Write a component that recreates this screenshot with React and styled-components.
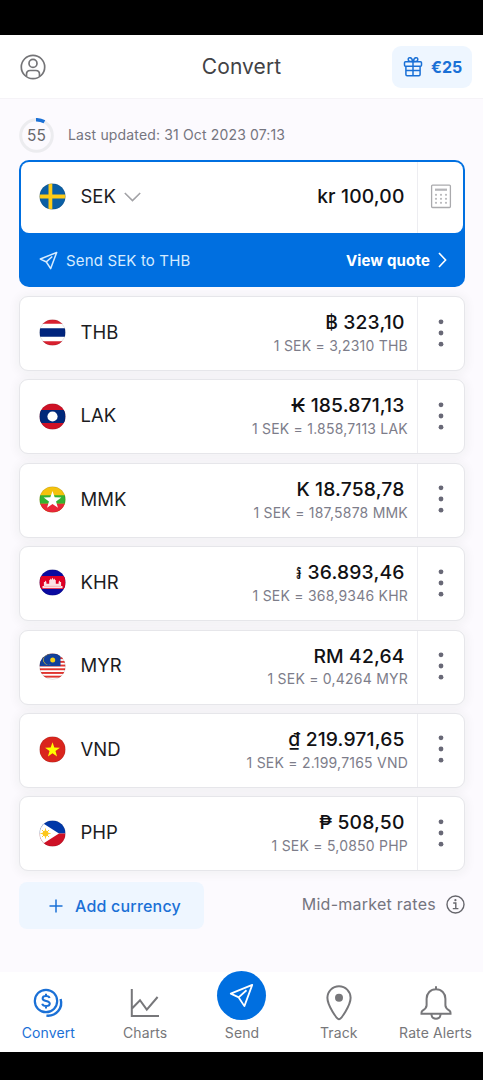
import React from "react";
import styled, { createGlobalStyle } from "styled-components";

const GlobalStyle = createGlobalStyle`
  * {
    box-sizing: border-box;
  }

  body {
    margin: 0;
    background: #000;
    font-family: Inter, "Noto Sans", "DejaVu Sans", sans-serif;
    -webkit-font-smoothing: antialiased;
  }

  svg {
    display: block;
    flex: none;
  }
`;

const Screen = styled.div`
  display: flex;
  flex-direction: column;
  width: 483px;
  height: 1080px;
  padding: 35px 0 28px;
  overflow: hidden;
  background: #000;
`;

const Header = styled.header`
  display: grid;
  grid-template-columns: 1fr auto 1fr;
  align-items: center;
  height: 63px;
  padding: 0 11px 0 20px;
  background: #fff;
`;

const Title = styled.h1`
  margin: 0 0 0 -9px;
  color: #424245;
  font-size: 21px;
  font-weight: 400;
  line-height: 26px;
  letter-spacing: 0.1px;
`;

const GiftButton = styled.button`
  display: flex;
  justify-self: end;
  align-items: center;
  gap: 8px;
  width: 80px;
  height: 42px;
  padding: 0 0 0 11px;
  border: 0;
  border-radius: 9px;
  background: #eef6ff;
  color: #1a70d6;
  font: 700 16px/20px Inter, sans-serif;
`;

const Main = styled.main`
  display: flex;
  flex: 1;
  flex-direction: column;
  padding: 18px 18px 0 19px;
  border-top: 1px solid #f5f3f7;
  background: #fcfafe;
`;

const Status = styled.div`
  display: flex;
  align-items: center;
  gap: 14px;
  height: 36px;
  color: #75757f;
  font-size: 14px;
  letter-spacing: 0.15px;
`;

const StatusText = styled.span`
  padding-bottom: 2px;
`;

const Timer = styled.div`
  display: grid;
  place-items: center;
  width: 35px;
  height: 35px;

  > * {
    grid-area: 1 / 1;
  }
`;

const Seconds = styled.span`
  color: #68686c;
  font-size: 15.5px;
`;

const BaseCard = styled.section`
  height: 127px;
  margin-top: 7px;
  padding: 2px 2px 0;
  border-radius: 10px;
  background: #006fe0;
`;

const BaseRow = styled.div`
  display: flex;
  height: 71px;
  overflow: hidden;
  border-radius: 8px;
  background: #fff;
`;

const QuoteBar = styled.div`
  display: flex;
  align-items: center;
  height: 54px;
  padding: 0 16px 0 18px;
  color: #d5ebff;
  font-size: 15px;
  letter-spacing: 0.15px;
`;

const QuoteLink = styled.span`
  display: flex;
  align-items: center;
  gap: 8px;
  margin-left: auto;
  color: #fff;
  font-size: 15px;
  font-weight: 700;
`;

const QuoteText = styled.span`
  margin-left: 8px;
`;

const List = styled.div`
  display: flex;
  flex-direction: column;
  gap: 8.4px;
  margin-top: 9px;
`;

const Card = styled.article`
  display: flex;
  height: 75px;
  border: 1px solid #e6e6ea;
  border-radius: 9px;
  background: #fff;
  box-shadow: 0 1px 10px 3px rgba(20, 40, 20, 0.04);
`;

const Currency = styled.div`
  display: flex;
  flex: 1;
  align-items: center;
  padding: 0 0 1.5px ${(p) => (p.$base ? "18px" : "19px")};
`;

const Code = styled.span`
  margin: 0 8.5px 0 14.5px;
  padding-bottom: 2px;
  color: #1c1c1f;
  font-size: 18.5px;
  line-height: 24px;
`;

const Values = styled.div`
  display: flex;
  flex-direction: column;
  justify-content: center;
  align-items: flex-end;
  gap: 0.8px;
  padding: 0 ${(p) => (p.$base ? "12.5px 4px" : "9px 2px")} 0;
`;

const Amount = styled.span`
  margin-right: ${(p) => (p.$base ? "0" : "3.5px")};
  color: #111114;
  font-size: 19.3px;
  font-weight: 450;
  line-height: 26px;
  letter-spacing: 0.15px;
  white-space: pre;
`;

const Rate = styled.span`
  color: #7d7d8a;
  font-size: 14px;
  line-height: 20px;
  letter-spacing: 0.22px;
`;

const Action = styled.div`
  display: flex;
  justify-content: center;
  align-items: center;
  width: ${(p) => (p.$base ? "46px" : "47px")};
  padding-bottom: 2px;
  border-left: 1px solid #ededf1;
`;

const Footer = styled.div`
  display: flex;
  justify-content: space-between;
  height: 48px;
  margin-top: 11px;
`;

const AddButton = styled.button`
  display: flex;
  align-items: center;
  gap: 12px;
  width: 185px;
  height: 47px;
  padding: 0 0 0 30px;
  border: 0;
  border-radius: 8px;
  background: #eef6ff;
  color: #1a70d6;
  font: 500 16px/20px Inter, sans-serif;
  letter-spacing: 0.2px;
`;

const MarketNote = styled.div`
  display: flex;
  align-items: center;
  gap: 10px;
  height: 44px;
  color: #75757f;
  font-size: 16px;
  letter-spacing: 0.26px;
`;

const Nav = styled.nav`
  display: grid;
  grid-template-columns: repeat(5, 1fr);
  height: 80px;
  margin-right: -1px;
  background: #fff;
`;

const NavItem = styled.div`
  display: flex;
  flex-direction: column;
  align-items: center;
  color: ${(p) => (p.$active ? "#1a70d6" : "#77777a")};
  font-size: 14px;
  line-height: 18px;
  letter-spacing: 0.1px;
`;

const NavIcon = styled.div`
  display: flex;
  justify-content: center;
  align-items: center;
  height: 62px;
  margin-bottom: -10px;
`;

const SendCircle = styled.div`
  display: flex;
  justify-content: center;
  align-items: center;
  width: 49px;
  height: 49px;
  margin: -15px 0 0;
  border-radius: 50%;
  background: #006fe0;
  color: #fff;
`;

const UserIcon = () => (
  <svg width="26" height="26" viewBox="0 0 26 26" fill="none" stroke="#747477" strokeWidth="1.7">
    <circle cx="13" cy="13" r="11.7" />
    <circle cx="13" cy="9.4" r="4" />
    <path d="M6.5 22.5v-2.2c0-2.3 1.4-3.8 3.6-3.8h5.8c2.2 0 3.6 1.5 3.6 3.8v2.2" />
  </svg>
);

const GiftIcon = () => (
  <svg width="20" height="21" viewBox="0 0 20 21" fill="none" stroke="currentColor" strokeWidth="1.5" strokeLinejoin="round">
    <rect x="1.5" y="5.8" width="17" height="4.4" rx="1" />
    <path d="M2.9 10.2v8.4c0 .7.5 1.2 1.2 1.2h11.8c.7 0 1.2-.5 1.2-1.2v-8.4M10 5.8v14M2.9 14.4h14.2" />
    <path d="M9.6 5.6C6 5.8 5 4.6 5.2 3.2 5.5.9 9.2.8 9.6 5.6ZM10.4 5.6c3.6.2 4.6-1 4.4-2.4-.3-2.3-4-2.4-4.4 2.4Z" />
  </svg>
);

const PlaneIcon = ({ size = 19, width = 1.6 }) => (
  <svg width={size} height={size} viewBox="0 0 20 20" fill="none" stroke="currentColor" strokeWidth={width} strokeLinejoin="round">
    <path d="M18.6 1.5 1.4 8.5l6 2.8.5.5 4.4 6.7ZM14 5.8 7.7 11.5" />
  </svg>
);

const CalculatorIcon = () => (
  <svg width="22" height="25" viewBox="0 0 22 25" fill="none">
    <rect x="1.6" y="1.1" width="18.8" height="22.4" rx="1" stroke="#aaaaad" strokeWidth="1.3" />
    <rect x="5" y="4.6" width="12" height="2.2" fill="#b5b5b8" />
    {[10.8, 14.8, 18.8].map((y) =>
      [6, 11, 16].map((x) => <circle key={`${x}-${y}`} cx={x} cy={y} r="1.1" fill="#b9b9bc" />)
    )}
  </svg>
);

const Dots = () => (
  <svg width="6" height="28" viewBox="0 0 6 28" fill="#686876">
    <circle cx="3" cy="2.8" r="2.4" />
    <circle cx="3" cy="14" r="2.4" />
    <circle cx="3" cy="25.2" r="2.4" />
  </svg>
);

const ConvertIcon = () => (
  <svg width="31" height="30" viewBox="0 0 31 30" fill="none" stroke="currentColor" strokeWidth="2.2">
    <circle cx="13" cy="13" r="11.2" />
    <path d="M16.6 10.1c-.4-1.4-1.7-2.1-3.5-2.1-2.1 0-3.5.9-3.5 2.4 0 3.5 7.2 1.6 7.2 5.2 0 1.6-1.5 2.5-3.7 2.5-2.1 0-3.5-.8-3.9-2.3M13 5.8v2.4M13 18v2.4" strokeWidth="2" />
    <path d="M27.6 11c2.6 8.8-4.2 17.6-14.2 16.6" strokeWidth="2.4" />
  </svg>
);

const ChartIcon = () => (
  <svg width="30" height="30" viewBox="0 0 30 30" fill="none" stroke="currentColor" strokeWidth="2">
    <path d="M1.8 1v27H29M2 20.5l8-8.3 6.8 9.4L27.6 9" />
  </svg>
);

const PinIcon = () => (
  <svg width="26" height="36" viewBox="0 0 26 36" fill="none" stroke="currentColor" strokeWidth="2">
    <path d="M13 34.3C11 34.3 1.4 20.5 1.4 12.8a11.6 11.6 0 0 1 23.2 0C24.6 20.5 15 34.3 13 34.3Z" />
    <circle cx="13" cy="12.8" r="4" fill="currentColor" stroke="none" />
  </svg>
);

const BellIcon = () => (
  <svg width="32" height="35" viewBox="0 0 32 35" fill="none" stroke="currentColor" strokeWidth="2">
    <path d="M16 .3v3M16 3.3c-5.6 0-9.4 4-9.4 9.4v6.6c0 2.6-1.2 3.7-4 5.4-.8.5-1.1 1.1-1.1 2v1.1h29v-1.1c0-.9-.3-1.5-1.1-2-2.8-1.7-4-2.8-4-5.4v-6.6c0-5.4-3.8-9.4-9.4-9.4Z" />
    <path d="M11.4 28c.2 3 2 4.8 4.6 4.8s4.4-1.8 4.6-4.8" />
  </svg>
);

const InfoIcon = () => (
  <svg width="19" height="19" viewBox="0 0 19 19" fill="none" stroke="#66666c" strokeWidth="1.4">
    <circle cx="9.5" cy="9.5" r="8.5" />
    <path d="M7.2 8h2.6v5.4M6.8 13.6h5.6" />
    <circle cx="9.4" cy="5.2" r="1.1" fill="#66666c" stroke="none" />
  </svg>
);

const star = (cx, cy, r) =>
  Array.from({ length: 10 }, (_, i) => {
    const radius = i % 2 ? r * 0.4 : r;
    const angle = (Math.PI * i) / 5 - Math.PI / 2;
    return `${cx + radius * Math.cos(angle)},${cy + radius * Math.sin(angle)}`;
  }).join(" ");

const flags = {
  SEK: (
    <>
      <rect width="26" height="26" fill="#0b5fa5" />
      <path d="M9 0h3.8v26H9zM0 11h26v4H0z" fill="#fecb17" />
    </>
  ),
  THB: (
    <>
      <rect width="26" height="26" fill="#fff" />
      <path d="M0 0h26v4.3H0zM0 21.7h26V26H0z" fill="#d8202f" />
      <path d="M0 8.7h26v8.6H0z" fill="#00247d" />
    </>
  ),
  LAK: (
    <>
      <rect width="26" height="26" fill="#ce1126" />
      <path d="M0 6.5h26v13H0z" fill="#00287a" />
      <circle cx="13" cy="13" r="5.1" fill="#fff" />
    </>
  ),
  MMK: (
    <>
      <rect width="26" height="26" fill="#f4c20d" />
      <path d="M0 8.7h26v8.6H0z" fill="#34b233" />
      <path d="M0 17.3h26V26H0z" fill="#ea2839" />
      <polygon points={star(13, 13.8, 9.3)} fill="#fff" />
    </>
  ),
  KHR: (
    <>
      <rect width="26" height="26" fill="#0a0aa0" />
      <path d="M0 6.5h26v13H0z" fill="#e00025" />
      <path d="M3 18.8v-2.2h1.4v-4h.9l.8-1.6.8 1.6v1.6h2.8v-3.4l.8-.6.5-1.5.5 1.5h.3l1.2-2 1.2 2h.3l.5-1.5.5 1.5.8.6v3.4h2.8v-1.6l.8-1.6.8 1.6h.9v4H23v2.2z" fill="#fbe3e6" />
      <path d="M4.5 16.8h17" stroke="#e88" strokeWidth="0.5" />
    </>
  ),
  MYR: (
    <>
      <rect width="26" height="26" fill="#fff" />
      {[0, 3.7, 7.4, 11.1, 14.8, 18.5, 22.2].map((y) => (
        <rect key={y} y={y} width="26" height="1.9" fill="#e0352f" />
      ))}
      <rect width="21" height="12.6" fill="#10409c" />
      <path d="M11.8 2.2a4.9 4.9 0 1 0 0 8.2 5.1 5.1 0 1 1 0-8.2Z" fill="#f7d117" />
      <circle cx="13.2" cy="6.4" r="2.5" fill="#f7d117" />
    </>
  ),
  VND: (
    <>
      <rect width="26" height="26" fill="#da251d" />
      <polygon points={star(13, 13.6, 7.8)} fill="#ff0" />
    </>
  ),
  PHP: (
    <>
      <path d="M0 0h26v13H0z" fill="#0038a8" />
      <path d="M0 13h26v13H0z" fill="#ce1126" />
      <path d="M-1 0 19.5 13-1 26z" fill="#fff" />
      <circle cx="6" cy="13" r="3" fill="#fcc61c" />
      <path d="M6 8v10M1 13h10M2.5 9.5l7 7M9.5 9.5l-7 7" stroke="#fcc61c" strokeWidth="0.9" />
    </>
  ),
};

const Flag = ({ code }) => (
  <svg width="27" height="27" viewBox="-0.5 -0.5 27 27">
    <clipPath id={`flag-${code}`}>
      <circle cx="13" cy="13" r="13" />
    </clipPath>
    <g clipPath={`url(#flag-${code})`}>{flags[code]}</g>
    <circle cx="13" cy="13" r="12.9" fill="none" stroke="#000" strokeOpacity="0.18" strokeWidth="0.6" />
  </svg>
);

const rates = [
  { code: "THB", amount: "฿ 323,10", rate: "3,2310" },
  { code: "LAK", amount: "₭ 185.871,13", rate: "1.858,7113" },
  { code: "MMK", amount: "K 18.758,78", rate: "187,5878" },
  { code: "KHR", amount: "៛ 36.893,46", rate: "368,9346" },
  { code: "MYR", amount: "RM 42,64", rate: "0,4264" },
  { code: "VND", amount: "₫ 219.971,65", rate: "2.199,7165" },
  { code: "PHP", amount: "₱ 508,50", rate: "5,0850" },
];

const App = () => {
  return (
    <>
      <GlobalStyle />
      <Screen>
        <Header>
          <UserIcon />
          <Title>Convert</Title>
          <GiftButton>
            <GiftIcon />
            €25
          </GiftButton>
        </Header>
        <Main>
          <Status>
            <Timer>
              <svg width="35" height="35" viewBox="0 0 35 35" fill="none" strokeWidth="3">
                <circle cx="17.5" cy="17.5" r="15.8" stroke="#ececef" />
                <path d="M17 1.7a15.8 15.8 0 0 1 8.4 2.1" stroke="#1a70d6" strokeWidth="3.4" />
              </svg>
              <Seconds>55</Seconds>
            </Timer>
            <StatusText>Last updated: 31 Oct 2023 07:13</StatusText>
          </Status>
          <BaseCard>
            <BaseRow>
              <Currency $base>
                <Flag code="SEK" />
                <Code>SEK</Code>
                <svg width="17" height="10" viewBox="0 0 17 10" fill="none" stroke="#a2a2a6" strokeWidth="1.6">
                  <path d="m.8 1 7.7 7.6L16.2 1" />
                </svg>
              </Currency>
              <Values $base>
                <Amount $base>kr 100,00</Amount>
              </Values>
              <Action $base>
                <CalculatorIcon />
              </Action>
            </BaseRow>
            <QuoteBar>
              <PlaneIcon />
              <QuoteText>Send SEK to THB</QuoteText>
              <QuoteLink>
                View quote
                <svg width="9" height="16" viewBox="0 0 9 16" fill="none" stroke="#fff" strokeWidth="1.6">
                  <path d="m1 1 6.6 7L1 15" />
                </svg>
              </QuoteLink>
            </QuoteBar>
          </BaseCard>
          <List>
            {rates.map(({ code, amount, rate }) => (
              <Card key={code}>
                <Currency>
                  <Flag code={code} />
                  <Code>{code}</Code>
                </Currency>
                <Values>
                  <Amount>{amount}</Amount>
                  <Rate>
                    1 SEK = {rate} {code}
                  </Rate>
                </Values>
                <Action>
                  <Dots />
                </Action>
              </Card>
            ))}
          </List>
          <Footer>
            <AddButton>
              <svg width="14" height="14" viewBox="0 0 14 14" stroke="currentColor" strokeWidth="1.5">
                <path d="M7 .5v13M.5 7h13" />
              </svg>
              Add currency
            </AddButton>
            <MarketNote>
              Mid-market rates
              <InfoIcon />
            </MarketNote>
          </Footer>
        </Main>
        <Nav>
          <NavItem $active>
            <NavIcon>
              <ConvertIcon />
            </NavIcon>
            Convert
          </NavItem>
          <NavItem>
            <NavIcon>
              <ChartIcon />
            </NavIcon>
            Charts
          </NavItem>
          <NavItem>
            <NavIcon>
              <SendCircle>
                <PlaneIcon size={25} width={1.4} />
              </SendCircle>
            </NavIcon>
            Send
          </NavItem>
          <NavItem>
            <NavIcon>
              <PinIcon />
            </NavIcon>
            Track
          </NavItem>
          <NavItem>
            <NavIcon>
              <BellIcon />
            </NavIcon>
            Rate Alerts
          </NavItem>
        </Nav>
      </Screen>
    </>
  );
};

export default App;
